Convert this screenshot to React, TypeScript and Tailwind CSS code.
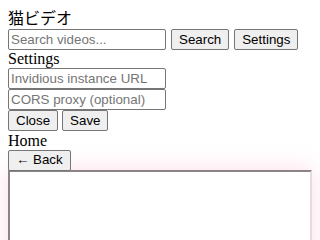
import React from 'react';

const inputCls =
  "w-[158px] h-[21px] px-[2px] border border-[#767676] rounded-[2px] bg-white text-[13.33px] text-black placeholder:text-[#757575] font-['Liberation_Sans',Arial,sans-serif] outline-none";
const btnCls =
  "h-[21px] px-[7px] border border-[#767676] rounded-[2px] bg-[#efefef] text-[13.33px] text-black leading-none font-['Liberation_Sans',Arial,sans-serif]";

const App: React.FC = () => {
  return (
    <div className="m-2 text-base text-black font-['Liberation_Serif','Noto_Sans_CJK_JP',serif]">
      <div className="h-[21px] leading-[21px]">猫ビデオ</div>
      <div className="flex items-center gap-[5px] h-[21px]">
        <input className={inputCls} placeholder="Search videos..." />
        <button className={btnCls}>Search</button>
        <button className={btnCls}>Settings</button>
      </div>
      <div className="h-[18px] leading-[18px]">Settings</div>
      <div className="flex flex-col gap-0">
        <input className={inputCls} placeholder="Invidious instance URL" />
        <input className={inputCls} placeholder="CORS proxy (optional)" />
      </div>
      <div className="flex items-center gap-[4px] h-[21px]">
        <button className={btnCls}>Close</button>
        <button className={btnCls}>Save</button>
      </div>
      <div className="h-[19px] leading-[19px]">Home</div>
      <div className="h-[20px] flex items-center">
        <button className={btnCls}>← Back</button>
      </div>
      <div className="h-[160px] w-full bg-white border-2 border-t-[#8a8488] border-l-[#8a8488] border-r-[#e2dcdf] border-b-[#e2dcdf] shadow-[0_0_22px_rgba(255,170,200,0.4)]" />
    </div>
  );
};

export default App;
